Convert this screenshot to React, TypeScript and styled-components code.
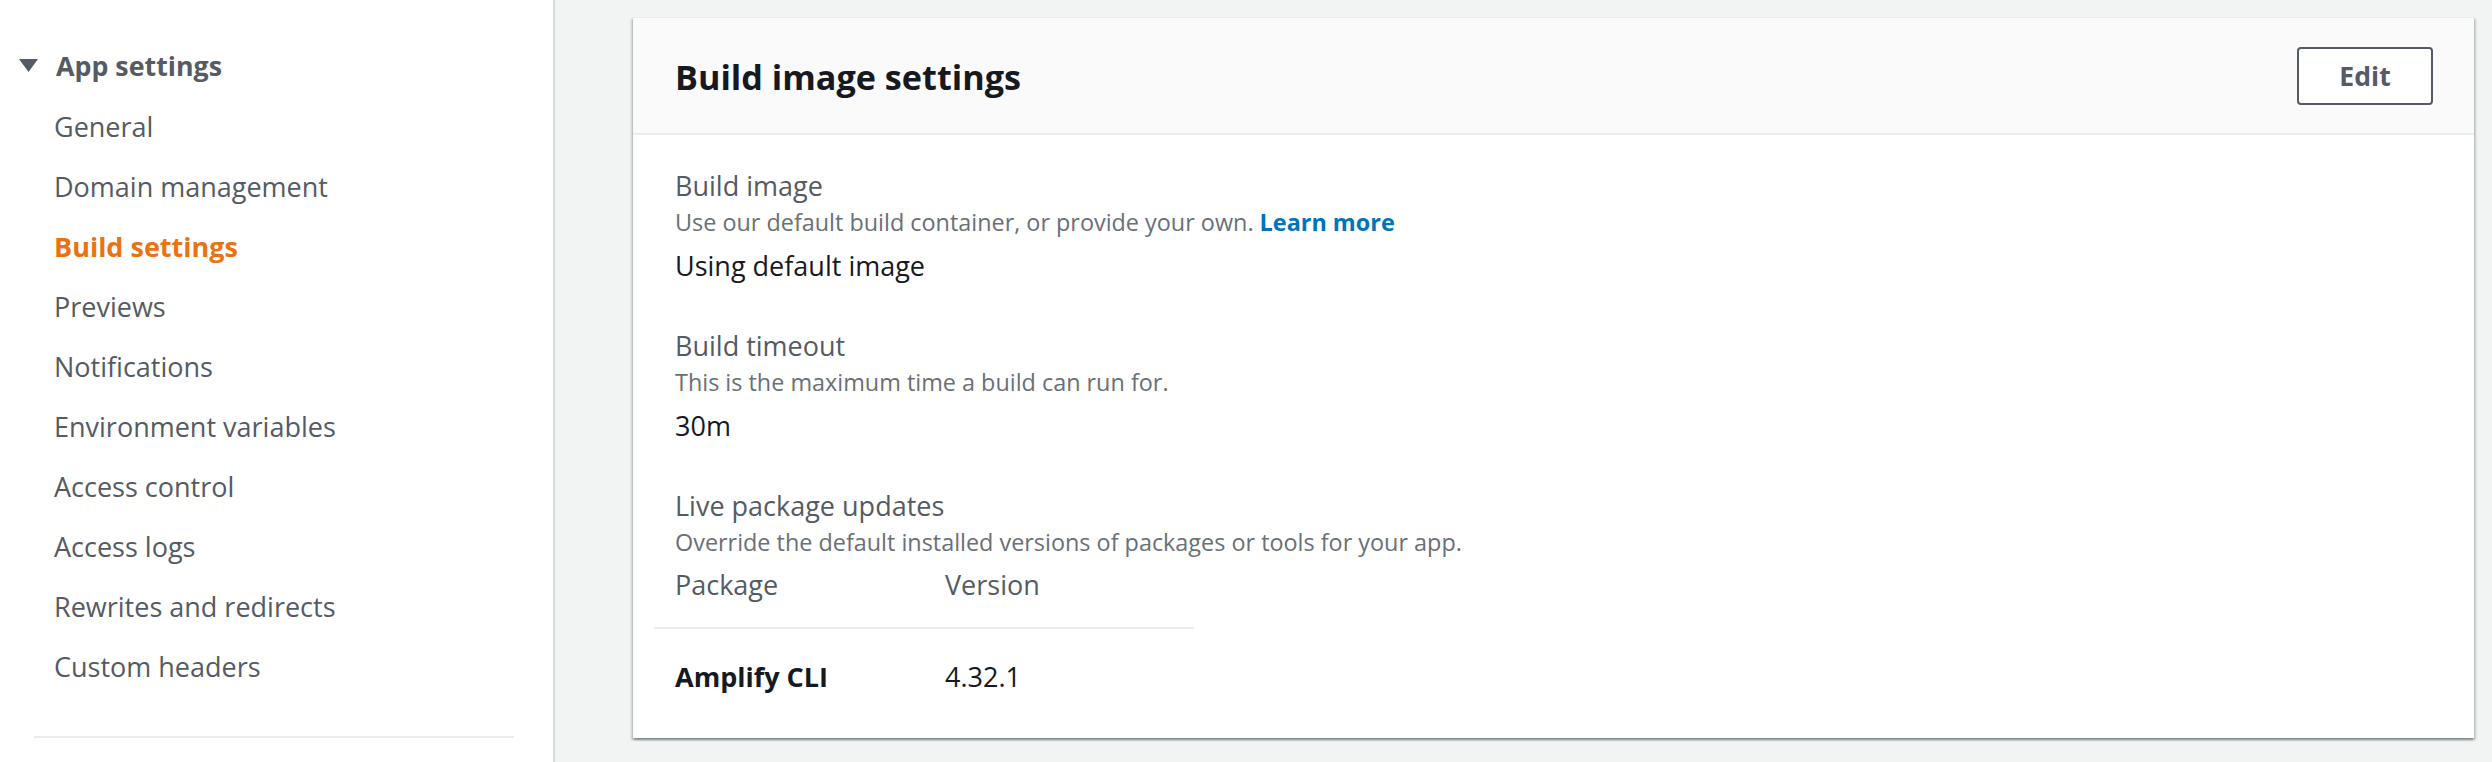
import React from "react";
import styled, { createGlobalStyle } from "styled-components";

const GlobalStyle = createGlobalStyle`
  html, body {
    margin: 0;
    padding: 0;
    background: #f2f3f3;
    font-family: "Open Sans", "Noto Sans", Arial, sans-serif;
    -webkit-font-smoothing: antialiased;
  }
  * { box-sizing: border-box; }
`;

const Page = styled.div`
  display: flex;
  height: 762px;
  overflow: hidden;
`;

const Sidebar = styled.nav`
  width: 555px;
  flex-shrink: 0;
  background: #ffffff;
  border-right: 2px solid #d5dbdb;
  padding: 35px 0 0 19px;
`;

const GroupHeader = styled.div`
  display: flex;
  align-items: center;
  gap: 18px;
  height: 60px;
  margin-bottom: 2px;
  font-size: 26.8px;
  font-weight: 700;
  color: #545b64;
`;

const NavList = styled.ul`
  list-style: none;
  margin: 0;
  padding: 0 0 0 35px;
`;

const NavItem = styled.li<{ $active?: boolean }>`
  height: 60px;
  line-height: 60px;
  font-size: 27px;
  font-weight: ${(p) => (p.$active ? 700 : 400)};
  color: ${(p) => (p.$active ? "#ec7211" : "#545b64")};
  white-space: nowrap;
`;

const Divider = styled.hr`
  margin: 39px 0 0 15px;
  width: 480px;
  border: none;
  border-top: 2px solid #eaeded;
`;

const Main = styled.main`
  flex: 1;
  padding: 17px 18px 0 78px;
`;

const Card = styled.section`
  background: #ffffff;
  box-shadow: 0 2px 2px 0 rgba(0, 28, 36, 0.3), 2px 2px 2px 0 rgba(0, 28, 36, 0.15),
    -2px 2px 2px 0 rgba(0, 28, 36, 0.15);
  border-top: 1px solid #eaeded;
`;

const CardHeader = styled.header`
  display: flex;
  align-items: center;
  justify-content: space-between;
  height: 117px;
  padding: 0 41px 0 42px;
  background: #fafafa;
  border-bottom: 2px solid #eaeded;
`;

const Title = styled.h2`
  margin: 0;
  font-size: 34.2px;
  line-height: 46px;
  font-weight: 700;
  color: #16191f;
  padding-top: 3px;
`;

const EditButton = styled.button`
  width: 136px;
  height: 58px;
  border: 2px solid #545b64;
  border-radius: 4px;
  background: #ffffff;
  color: #545b64;
  font-family: inherit;
  font-size: 26.6px;
  font-weight: 700;
  padding: 0;
  cursor: pointer;
`;

const CardBody = styled.div`
  display: flex;
  flex-direction: column;
  gap: 42px;
  padding: 32px 42px 22px;
`;

const Field = styled.div`
  display: flex;
  flex-direction: column;
`;

const Label = styled.div`
  font-size: 27px;
  line-height: 38px;
  color: #545b64;
`;

const Description = styled.div`
  font-size: 23.4px;
  line-height: 34px;
  color: #687078;
`;

const Link = styled.a`
  color: #0073bb;
  font-weight: 700;
  text-decoration: none;
`;

const Value = styled.div`
  margin-top: 8px;
  font-size: 27px;
  line-height: 38px;
  color: #16191f;
`;

const Table = styled.table`
  margin-left: -21px;
  width: 540px;
  border-collapse: collapse;
  table-layout: fixed;
`;

const Th = styled.th`
  text-align: left;
  font-weight: 400;
  font-size: 27px;
  line-height: 38px;
  color: #545b64;
  padding: 7px 21px 23px;
  border-bottom: 2px solid #eaeded;
`;

const Td = styled.td<{ $strong?: boolean }>`
  font-size: 27px;
  line-height: 38px;
  font-weight: ${(p) => (p.$strong ? 700 : 400)};
  color: #16191f;
  padding: 29px 21px 20px;
`;

const Caret = () => (
  <svg width="19" height="13" viewBox="0 0 19 13" aria-hidden="true">
    <path d="M0 0 H19 L9.5 13 Z" fill="#545b64" />
  </svg>
);

const navItems = [
  "General",
  "Domain management",
  "Build settings",
  "Previews",
  "Notifications",
  "Environment variables",
  "Access control",
  "Access logs",
  "Rewrites and redirects",
  "Custom headers",
];

export default function App() {
  return (
    <>
      <GlobalStyle />
      <Page>
        <Sidebar>
          <GroupHeader>
            <Caret />
            App settings
          </GroupHeader>
          <NavList>
            {navItems.map((item) => (
              <NavItem key={item} $active={item === "Build settings"}>
                {item}
              </NavItem>
            ))}
          </NavList>
          <Divider />
        </Sidebar>
        <Main>
          <Card>
            <CardHeader>
              <Title>Build image settings</Title>
              <EditButton>Edit</EditButton>
            </CardHeader>
            <CardBody>
              <Field>
                <Label>Build image</Label>
                <Description>
                  Use our default build container, or provide your own. <Link href="#">Learn more</Link>
                </Description>
                <Value>Using default image</Value>
              </Field>
              <Field>
                <Label>Build timeout</Label>
                <Description>This is the maximum time a build can run for.</Description>
                <Value>30m</Value>
              </Field>
              <Field>
                <Label>Live package updates</Label>
                <Description>
                  Override the default installed versions of packages or tools for your app.
                </Description>
                <Table>
                  <thead>
                    <tr>
                      <Th>Package</Th>
                      <Th>Version</Th>
                    </tr>
                  </thead>
                  <tbody>
                    <tr>
                      <Td $strong>Amplify CLI</Td>
                      <Td>4.32.1</Td>
                    </tr>
                  </tbody>
                </Table>
              </Field>
            </CardBody>
          </Card>
        </Main>
      </Page>
    </>
  );
}
